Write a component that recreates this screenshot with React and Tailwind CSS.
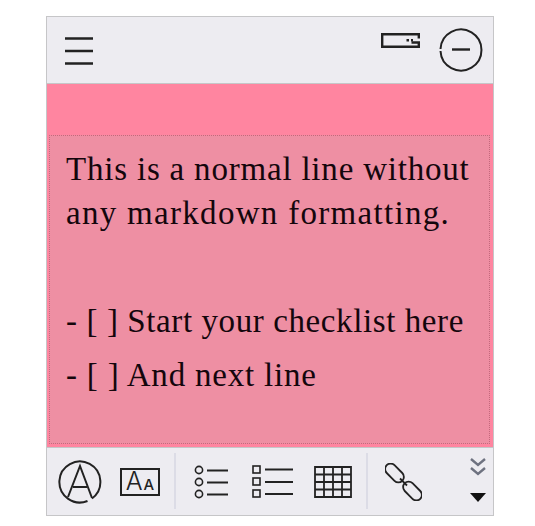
import React from 'react';

const Divider = () => <div className="w-[2px] h-[56px] mt-[-1px] bg-[#dcdce6]" />;

const App = () => {
  return (
    <div className="w-[535px] h-[526px] bg-white pt-4 pl-[46px]">
      <div className="w-[448px] h-[500px] flex flex-col border border-[#c6c6c8] bg-[#ff85a0]">
        {/* top bar */}
        <div className="h-[67px] shrink-0 flex items-start justify-between bg-[#edecf1] border-b border-[#c6c6c8]">
          <svg width="30" height="32" viewBox="0 0 30 32" className="ml-[18px] mt-[19px]">
            <path d="M0 2.5H28M0 15H28M0 27.5H28" stroke="#222" strokeWidth="2.6" fill="none" />
          </svg>
          <div className="flex items-start mr-[10px]">
            <svg width="39" height="15" viewBox="0 0 39 15" className="mt-[16px]">
              <path d="M37.8 5.5V1.2H1.2V13.8H37.8V9.5H30.5" stroke="#222" strokeWidth="2.4" fill="none" />
              <rect x="25.5" y="6" width="2.5" height="2.5" fill="#222" />
              <rect x="30" y="6" width="2" height="2.5" fill="#222" />
            </svg>
            <svg width="44" height="44" viewBox="0 0 44 44" className="ml-[19px] mt-[11px]">
              <path d="M1.5 21A20.5 20.5 0 1 1 1.5 23" stroke="#222" strokeWidth="2" fill="none" />
              <path d="M13 21.5H31" stroke="#222" strokeWidth="2.4" />
            </svg>
          </div>
        </div>

        {/* note area */}
        <div className="flex-1 pt-[51px] pl-[2px] pr-[3px] pb-[3px] flex">
          <div className="flex-1 bg-[#ee8fa3] border border-dotted border-[#c4687c] pl-4 pt-[11px] text-[#14060c] text-[33px] font-['Liberation_Serif',serif]">
            <p className="leading-[44px] tracking-[0.8px]">This is a normal line without</p>
            <p className="leading-[44px] tracking-[1.3px]">any markdown formatting.</p>
            <p className="leading-[44px] mt-[64px] tracking-[0.6px]">- [ ] Start your checklist here</p>
            <p className="leading-[44px] mt-[10px] tracking-[0.8px]">- [ ] And next line</p>
          </div>
        </div>

        {/* bottom bar */}
        <div className="h-[68px] shrink-0 flex items-center bg-[#edecf1] border-t border-[#c6c6c8]">
          <svg width="44" height="44" viewBox="0 0 44 44" className="ml-[11px]">
            <path d="M29.5 41A20.5 20.5 0 1 1 34 38.5" stroke="#222" strokeWidth="2" fill="none" />
            <path d="M10 37L22 6L34 38M15 27H29" stroke="#222" strokeWidth="2" fill="none" />
          </svg>
          <div className="ml-[18px] mr-[14px] w-[40px] h-[28px] border-2 border-[#222] flex items-end justify-center gap-[1px] pb-[2px] text-[#222] leading-none font-['Inter',sans-serif]">
            <span className="text-[25px] leading-[22px] font-light">A</span>
            <span className="text-[15px] leading-[14px] font-medium">A</span>
          </div>
          <Divider />
          <svg width="36" height="34" viewBox="0 0 36 34" className="ml-[18px]">
            <g stroke="#222" strokeWidth="1.6" fill="none">
              <circle cx="5" cy="5" r="3.6" />
              <circle cx="5" cy="17" r="3.6" />
              <circle cx="5" cy="29" r="3.6" />
            </g>
            <path d="M13 5.5H34M13 17.5H34M13 29.5H34" stroke="#222" strokeWidth="2" />
          </svg>
          <svg width="42" height="34" viewBox="0 0 42 34" className="ml-[22px]">
            <g stroke="#222" strokeWidth="1.6" fill="none">
              <rect x="1" y="1" width="7" height="7" />
              <rect x="1" y="13" width="7" height="7" />
              <rect x="1" y="25" width="7" height="7" />
            </g>
            <path d="M13 4.5H41M13 17H41M13 29H41" stroke="#222" strokeWidth="2" />
          </svg>
          <svg width="38" height="32" viewBox="0 0 38 32" className="ml-[20px]">
            <path d="M1 1H37V31H1ZM10 1V31M19 1V31M28 1V31M1 8.5H37M1 16H37M1 23.5H37" stroke="#222" strokeWidth="1.8" fill="none" />
          </svg>
          <div className="ml-[14px]">
            <Divider />
          </div>
          <svg width="37" height="38" viewBox="0 0 37 38" className="ml-[17px]">
            <g stroke="#222" strokeWidth="1.8" fill="none">
              <rect x="-11" y="-5.5" width="22" height="11" rx="5.5" transform="translate(9.5 10) rotate(45)" />
              <rect x="-11" y="-5.5" width="22" height="11" rx="5.5" transform="translate(27.5 28) rotate(45)" />
              <path d="M15 15.5L22 22.5" />
            </g>
          </svg>
          <div className="ml-[48px] flex flex-col items-center gap-[17px] mt-[-4px]">
            <svg width="16" height="18" viewBox="0 0 16 18">
              <path d="M1 1L8 7L15 1M1 10L8 16L15 10" stroke="#6e7280" strokeWidth="2.4" fill="none" />
            </svg>
            <svg width="16" height="9" viewBox="0 0 16 9">
              <path d="M0 0H16L8 9Z" fill="#111" />
            </svg>
          </div>
        </div>
      </div>
    </div>
  );
};

export default App;
